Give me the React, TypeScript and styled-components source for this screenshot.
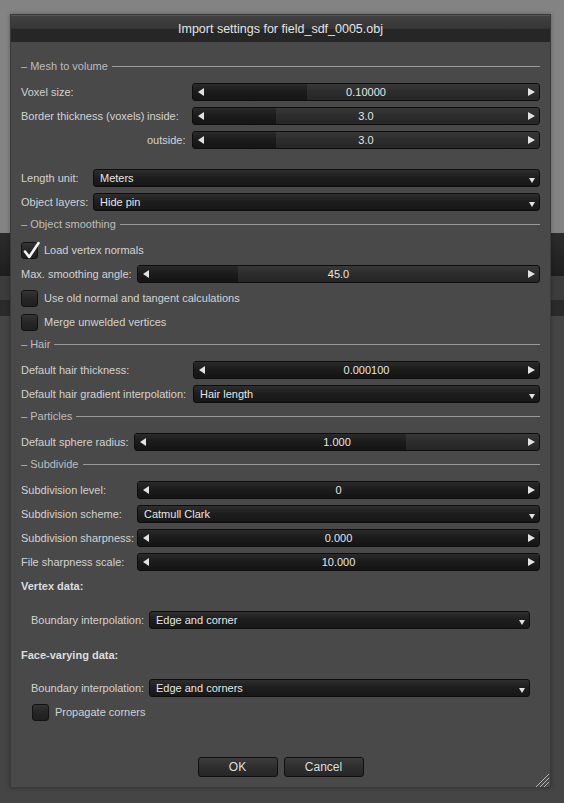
import styled, { createGlobalStyle } from 'styled-components';

const GlobalStyle = createGlobalStyle`
  html, body {
    margin: 0;
    padding: 0;
  }
  body {
    background: #454545;
    font-family: "Liberation Sans", Arial, sans-serif;
  }
`;

const Page = styled.div`
  position: relative;
  width: 564px;
  height: 803px;
  overflow: hidden;
  background: #454545;
`;

const Band = styled.div<{ $h: number; $bg: string }>`
  height: ${(p) => p.$h}px;
  background: ${(p) => p.$bg};
`;

const Dialog = styled.div`
  position: absolute;
  left: 10px;
  top: 14px;
  width: 541px;
  height: 774px;
  box-sizing: border-box;
  display: flex;
  flex-direction: column;
  background: #494949;
  border: 1px solid #3a3a3a;
  box-shadow: 0 0 4px rgba(0, 0, 0, 0.3);
`;

const TitleBar = styled.div`
  height: 27px;
  display: flex;
  align-items: center;
  justify-content: center;
  background: linear-gradient(#424242 0%, #363636 48%, #262626 52%, #262626 100%);
  border-top: 1px solid #555;
  box-sizing: border-box;
  color: #e4e4e4;
  font-size: 12.5px;
`;

const Body = styled.div`
  position: relative;
  flex: 1;
  display: flex;
  flex-direction: column;
  padding: 14px 10px 10px 10px;
  color: #d2d2d2;
  font-size: 11px;
`;

const SectionHead = styled.div`
  display: flex;
  align-items: center;
  gap: 4px;
  height: 20px;
  margin-bottom: 4px;
  color: #bdbdbd;
  white-space: nowrap;

  &::after {
    content: '';
    flex: 1;
    height: 1px;
    background: #9a9a9a;
  }
`;

const Row = styled.div<{ $label: number; $indent?: number }>`
  display: grid;
  grid-template-columns: ${(p) => p.$label}px 1fr;
  align-items: center;
  height: 24px;
  padding: 0 ${(p) => p.$indent ?? 0}px;
  white-space: nowrap;
`;

const SplitLabel = styled.div`
  display: grid;
  grid-template-columns: 126px auto;
`;

const RightLabel = styled.span`
  grid-column: 2;
`;

const Spacer = styled.div<{ $h: number }>`
  height: ${(p) => p.$h}px;
`;

const BoldLabel = styled.div<{ $after: number }>`
  height: 24px;
  line-height: 24px;
  font-weight: bold;
  color: #dcdcdc;
  margin-bottom: ${(p) => p.$after}px;
`;

const SliderBox = styled.div`
  position: relative;
  height: 18px;
  box-sizing: border-box;
  display: flex;
  align-items: center;
  padding: 0 4px 0 5px;
  border: 1px solid #0d0d0d;
  border-radius: 3px;
  overflow: hidden;
  background: linear-gradient(#383838, #2d2d2d 45%, #262626);
  color: #e6e6e6;
`;

const SliderFill = styled.div`
  position: absolute;
  left: 0;
  top: 0;
  bottom: 0;
  background: linear-gradient(#2a2a2a, #1c1c1c 45%, #141414);
`;

const SliderValue = styled.span`
  position: relative;
  flex: 1;
  text-align: center;
`;

const ArrowLeft = styled.span`
  position: relative;
  width: 0;
  height: 0;
  border-top: 4px solid transparent;
  border-bottom: 4px solid transparent;
  border-right: 6px solid #e2e2e2;
`;

const ArrowRight = styled.span`
  position: relative;
  width: 0;
  height: 0;
  border-top: 4px solid transparent;
  border-bottom: 4px solid transparent;
  border-left: 7px solid #e2e2e2;
`;

const SelectBox = styled.div`
  height: 18px;
  box-sizing: border-box;
  display: flex;
  align-items: center;
  padding: 0 4px 0 6px;
  border: 1px solid #0d0d0d;
  border-radius: 3px;
  background: linear-gradient(#2e2e2e, #1e1e1e 45%, #171717);
  color: #e6e6e6;
`;

const SelectText = styled.span`
  flex: 1;
`;

const ArrowDown = styled.span`
  align-self: flex-end;
  margin-bottom: 3px;
  width: 0;
  height: 0;
  border-left: 3.5px solid transparent;
  border-right: 3.5px solid transparent;
  border-top: 5px solid #e2e2e2;
`;

const CheckRow = styled.div<{ $indent?: number }>`
  display: flex;
  align-items: center;
  gap: 6px;
  height: 24px;
  padding-left: ${(p) => p.$indent ?? 0}px;
`;

const Box = styled.div`
  position: relative;
  width: 17px;
  height: 17px;
  box-sizing: border-box;
  border: 1px solid #121212;
  border-radius: 3px;
  background: linear-gradient(#343434, #262626 50%, #1f1f1f);
`;

const CheckMark = styled.svg`
  position: absolute;
  left: -1px;
  top: -3px;
`;

const Buttons = styled.div`
  margin-top: auto;
  display: flex;
  justify-content: center;
  gap: 6px;
`;

const Button = styled.button`
  width: 80px;
  height: 20px;
  box-sizing: border-box;
  padding: 0;
  border: 1px solid #101010;
  border-radius: 3px;
  background: linear-gradient(#3c3c3c, #2e2e2e 50%, #262626);
  color: #dedede;
  font-family: "Liberation Sans", Arial, sans-serif;
  font-size: 12px;
`;

const Grip = styled.svg`
  position: absolute;
  right: 0;
  bottom: 0;
`;

const Slider = ({ value, fill }: { value: string; fill: number }) => (
  <SliderBox>
    <SliderFill style={{ width: `${fill}%` }} />
    <ArrowLeft />
    <SliderValue>{value}</SliderValue>
    <ArrowRight />
  </SliderBox>
);

const Select = ({ value }: { value: string }) => (
  <SelectBox>
    <SelectText>{value}</SelectText>
    <ArrowDown />
  </SelectBox>
);

const Check = ({ label, checked, indent }: { label: string; checked?: boolean; indent?: number }) => (
  <CheckRow $indent={indent}>
    <Box>
      {checked && (
        <CheckMark width="20" height="20" viewBox="0 0 20 20">
          <path d="M4 11.5 L8.2 17 L17.5 3" fill="none" stroke="#f4f4f4" strokeWidth="2.6" strokeLinecap="round" strokeLinejoin="round" />
        </CheckMark>
      )}
    </Box>
    <span>{label}</span>
  </CheckRow>
);

const App = () => {
  return (
    <Page>
      <GlobalStyle />
      <Band $h={233} $bg="#838383" />
      <Band $h={43} $bg="linear-gradient(#2c2c2c, #1e1e1e)" />
      <Band $h={24} $bg="#3c3c3c" />
      <Band $h={16} $bg="#2a2a2a" />
      <Dialog>
        <TitleBar>Import settings for field_sdf_0005.obj</TitleBar>
        <Body>
          <SectionHead>– Mesh to volume</SectionHead>
          <Row $label={171}>
            <span>Voxel size:</span>
            <Slider value="0.10000" fill={33} />
          </Row>
          <Row $label={171}>
            <SplitLabel>
              <span>Border thickness (voxels)</span>
              <span>inside:</span>
            </SplitLabel>
            <Slider value="3.0" fill={24} />
          </Row>
          <Row $label={171}>
            <SplitLabel>
              <RightLabel>outside:</RightLabel>
            </SplitLabel>
            <Slider value="3.0" fill={24} />
          </Row>
          <Spacer $h={14} />
          <Row $label={72}>
            <span>Length unit:</span>
            <Select value="Meters" />
          </Row>
          <Row $label={72}>
            <span>Object layers:</span>
            <Select value="Hide pin" />
          </Row>

          <SectionHead>– Object smoothing</SectionHead>
          <Check label="Load vertex normals" checked />
          <Row $label={116}>
            <span>Max. smoothing angle:</span>
            <Slider value="45.0" fill={25} />
          </Row>
          <Check label="Use old normal and tangent calculations" />
          <Check label="Merge unwelded vertices" />

          <SectionHead>– Hair</SectionHead>
          <Row $label={172}>
            <span>Default hair thickness:</span>
            <Slider value="0.000100" fill={100} />
          </Row>
          <Row $label={172}>
            <span>Default hair gradient interpolation:</span>
            <Select value="Hair length" />
          </Row>

          <SectionHead>– Particles</SectionHead>
          <Row $label={113}>
            <span>Default sphere radius:</span>
            <Slider value="1.000" fill={67} />
          </Row>

          <SectionHead>– Subdivide</SectionHead>
          <Row $label={116}>
            <span>Subdivision level:</span>
            <Slider value="0" fill={100} />
          </Row>
          <Row $label={116}>
            <span>Subdivision scheme:</span>
            <Select value="Catmull Clark" />
          </Row>
          <Row $label={116}>
            <span>Subdivision sharpness:</span>
            <Slider value="0.000" fill={100} />
          </Row>
          <Row $label={116}>
            <span>File sharpness scale:</span>
            <Slider value="10.000" fill={100} />
          </Row>

          <BoldLabel $after={10}>Vertex data:</BoldLabel>
          <Row $label={118} $indent={10}>
            <span>Boundary interpolation:</span>
            <Select value="Edge and corner" />
          </Row>
          <Spacer $h={11} />
          <BoldLabel $after={9}>Face-varying data:</BoldLabel>
          <Row $label={118} $indent={10}>
            <span>Boundary interpolation:</span>
            <Select value="Edge and corners" />
          </Row>
          <Check label="Propagate corners" indent={11} />

          <Buttons>
            <Button>OK</Button>
            <Button>Cancel</Button>
          </Buttons>
          <Grip width="17" height="18" viewBox="0 0 17 18">
            <path d="M16 5 L3 18 M16 9 L7 18 M16 13 L11 18" stroke="#b4b4b4" strokeWidth="1" />
          </Grip>
        </Body>
      </Dialog>
    </Page>
  );
};

export default App;
